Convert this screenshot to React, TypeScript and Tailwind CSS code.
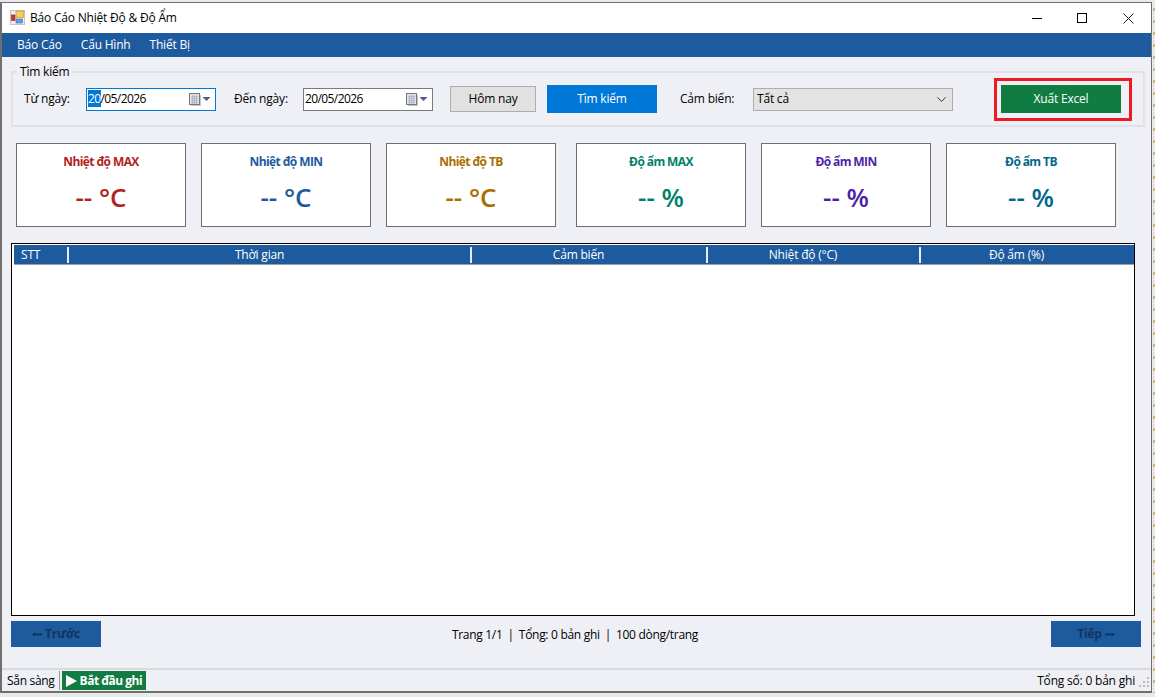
import { ChevronDown } from 'lucide-react';

const cards = [
  { title: 'Nhiệt độ MAX', value: '-- °C', color: 'text-[#b22222]', ml: 'ml-[14px]' },
  { title: 'Nhiệt độ MIN', value: '-- °C', color: 'text-[#1d5a9e]', ml: 'ml-[15px]' },
  { title: 'Nhiệt độ TB', value: '-- °C', color: 'text-[#a86e00]', ml: 'ml-[15px]' },
  { title: 'Độ ẩm MAX', value: '-- %', color: 'text-[#00806a]', ml: 'ml-[20px]' },
  { title: 'Độ ẩm MIN', value: '-- %', color: 'text-[#4f1fa8]', ml: 'ml-[15px]' },
  { title: 'Độ ẩm TB', value: '-- %', color: 'text-[#00688b]', ml: 'ml-[15px]' },
];

const columns = [
  { name: 'STT', width: 'w-[55px]', align: 'text-left pl-[7px]' },
  { name: 'Thời gian', width: 'w-[403px]', align: 'text-center pr-[20px]' },
  { name: 'Cảm biến', width: 'w-[236px]', align: 'text-center pr-[21px]' },
  { name: 'Nhiệt độ (°C)', width: 'w-[213px]', align: 'text-center pr-[21px]' },
  { name: 'Độ ẩm (%)', width: 'flex-1', align: 'text-center pr-[22px]' },
];

function AppIcon() {
  return (
    <svg width="16" height="16" viewBox="0 0 16 16" className="shrink-0">
      <rect x="0.5" y="0.5" width="14" height="14" fill="#efefef" stroke="#c4c4c4" />
      <rect x="6" y="1" width="7.5" height="6.5" fill="#f5cf5a" stroke="#b98a1e" strokeWidth="0.6" />
      <rect x="1.5" y="5" width="3.5" height="5.5" fill="#c0392b" stroke="#8a2018" strokeWidth="0.6" />
      <rect x="6" y="9" width="6.5" height="4" fill="#6d9be0" stroke="#3a6ab0" strokeWidth="0.6" />
    </svg>
  );
}

function CalendarIcon() {
  return (
    <svg width="22" height="13" viewBox="0 0 22 13" className="shrink-0">
      <rect x="0.5" y="0.5" width="10" height="11" fill="#dfe3ea" stroke="#77777b" />
      <path d="M2 3.5h7M2 5.5h7M2 7.5h7M2 9.5h7M3.5 2v9M5.5 2v9M7.5 2v9" stroke="#a5adbd" strokeWidth="0.7" />
      <path d="M11.5 2v10.5H2" fill="none" stroke="#c4c4c4" />
      <path d="M13.5 4h8l-4 4z" fill="#4a5f85" />
    </svg>
  );
}

function PagerArrow({ flip }: { flip?: boolean }) {
  return (
    <svg width="10" height="7" viewBox="0 0 10 7" className={flip ? 'rotate-180' : ''}>
      <path d="M2 2.5h8v2H2zM0 3.5L3 1.5v4z" fill="#12345c" />
    </svg>
  );
}

function DateBox({ focused }: { focused?: boolean }) {
  return (
    <div
      className={`w-[130px] h-[23px] bg-white border flex items-center pl-[1px] pr-[4px] ${
        focused ? 'border-[#0078d7]' : 'border-[#7a7a7a]'
      }`}
    >
      <span className="flex-1 leading-none tracking-[-0.6px]">
        {focused ? <span className="bg-[#0078d7] text-white">20</span> : '20'}
        /05/2026
      </span>
      <CalendarIcon />
    </div>
  );
}

export default function App() {
  return (
    <div className="w-[1155px] h-[697px] overflow-hidden flex bg-[#e9e9e9] pt-[2px] text-[12px] text-black font-['Open_Sans','Noto_Sans',sans-serif] tracking-[-0.2px]">
      <div className="w-[1152px] h-[691px] shrink-0 flex flex-col bg-[#eff0f5] border-l-2 border-r border-b-2 border-t border-[#6f6f6f]">
        {/* title bar */}
        <div className="h-[30px] shrink-0 bg-white flex items-center pl-[8px]">
          <AppIcon />
          <span className="ml-[4px] flex-1">Báo Cáo Nhiệt Độ &amp; Độ Ẩm</span>
          <div className="w-[10px] h-[1px] bg-black mr-[35px]" />
          <div className="w-[10px] h-[10px] border border-black mr-[36px]" />
          <svg width="11" height="11" viewBox="0 0 11 11" className="mr-[17px]">
            <path d="M0.5 0.5l10 10M10.5 0.5l-10 10" stroke="#222" strokeWidth="1" />
          </svg>
        </div>

        {/* menu */}
        <div className="h-[24px] shrink-0 bg-[#1d5a9e] text-white flex items-center pl-[15px] gap-[19px]">
          <span>Báo Cáo</span>
          <span>Cấu Hình</span>
          <span>Thiết Bị</span>
        </div>

        {/* search group */}
        <div className="relative ml-[9px] mt-[14px] w-[1134px] h-[56px] shrink-0 border-2 border-[#e1e2e6] flex items-center">
          <span className="absolute left-[4px] top-[-9px] bg-[#eff0f5] px-[3px] leading-[16px]">Tìm kiếm</span>
          <span className="ml-[11px] w-[62px]">Từ ngày:</span>
          <DateBox focused />
          <span className="ml-[18px] w-[69px]">Đến ngày:</span>
          <DateBox />
          <button className="ml-[17px] w-[86px] h-[26px] bg-[#e1e1e1] border border-[#adadad]">Hôm nay</button>
          <button className="ml-[11px] w-[110px] h-[28px] bg-[#0078d7] text-white">Tìm kiếm</button>
          <span className="ml-[23px] w-[73px]">Cảm biến:</span>
          <div className="w-[200px] h-[23px] bg-[#e3e3e3] border border-[#adadad] flex items-center pl-[3px] pr-[3px]">
            <span className="flex-1">Tất cả</span>
            <ChevronDown size={15} strokeWidth={1.6} className="text-[#333]" />
          </div>
          <div className="ml-[41px] w-[138px] h-[43px] border-[3px] border-[#ed1c24] flex items-center pl-[4px]">
            <button className="w-[120px] h-[28px] bg-[#107c41] text-white">Xuất Excel</button>
          </div>
        </div>

        {/* stat cards */}
        <div className="flex mt-[16px] shrink-0">
          {cards.map((c, i) => (
            <div
              key={i}
              className={`w-[170px] h-[84px] bg-white border border-[#6e6e6e] flex flex-col items-center ${c.ml} ${c.color}`}
            >
              <span className="mt-[10px] font-bold leading-[16px] tracking-[-0.6px]">{c.title}</span>
              <span className="mt-[11px] text-[26px] font-semibold leading-[32px] tracking-normal">{c.value}</span>
            </div>
          ))}
        </div>

        {/* table */}
        <div className="ml-[9px] mt-[16px] w-[1124px] h-[373px] shrink-0 bg-white border border-black pt-[1px]">
          <div className="ml-[2px] h-[20px] bg-[#1d5a9e] text-white border-b border-[#a0a0a0] flex items-center">
            {columns.map((col, i) => (
              <div
                key={col.name}
                className={`h-[16px] leading-[16px] ${col.width} ${col.align} ${
                  i < columns.length - 1 ? 'border-r-2 border-[#e6ecf5]' : ''
                }`}
              >
                {col.name}
              </div>
            ))}
          </div>
        </div>

        {/* pager */}
        <div className="ml-[9px] mt-[5px] w-[1130px] h-[26px] shrink-0 flex items-center justify-between">
          <button className="w-[90px] h-[26px] bg-[#1d5a9e] text-[#12345c] font-bold flex items-center justify-center gap-[3px]">
            <PagerArrow />
            Trước
          </button>
          <span className="flex gap-[5px] pt-[1px] pr-[2px] tracking-[-0.3px]">
            <span>Trang 1/1</span>
            <span>|</span>
            <span>Tổng: 0 bản ghi</span>
            <span>|</span>
            <span>100 dòng/trang</span>
          </span>
          <button className="w-[90px] h-[26px] bg-[#1d5a9e] text-[#12345c] font-bold flex items-center justify-center gap-[3px]">
            Tiếp
            <PagerArrow flip />
          </button>
        </div>

        {/* status bar */}
        <div className="mt-auto h-[23px] shrink-0 border-t-2 border-[#d9dade] flex items-center pl-[5px] tracking-[-0.3px]">
          <span>Sẵn sàng</span>
          <div className="w-[1px] h-[19px] bg-[#9a9a9a] ml-[4px] mr-[2px]" />
          <div className="h-[19px] w-[84px] pl-[4px] bg-[#107c41] text-white font-bold flex items-center gap-[3px] tracking-[-0.5px] whitespace-nowrap">
            <svg width="11" height="12" viewBox="0 0 11 12"><path d="M0 0l11 6-11 6z" fill="#fff" /></svg>
            Bắt đầu ghi
          </div>
          <span className="ml-auto tracking-[-0.2px]">Tổng số: 0 bản ghi</span>
          <svg width="10" height="10" viewBox="0 0 10 10" className="ml-[4px] mr-[2px] mt-[2px]">
            <path d="M8 0h2v2H8zM4 4h2v2H4zM8 4h2v2H8zM0 8h2v2H0zM4 8h2v2H4zM8 8h2v2H8z" fill="#bcbcbc" />
          </svg>
        </div>
      </div>
      <div className="ml-[1px] mt-[6px] w-[2px] h-[685px] bg-[repeating-linear-gradient(180deg,#d9b77a_0,#d9b77a_3px,transparent_3px,transparent_12px)]" />
    </div>
  );
}
